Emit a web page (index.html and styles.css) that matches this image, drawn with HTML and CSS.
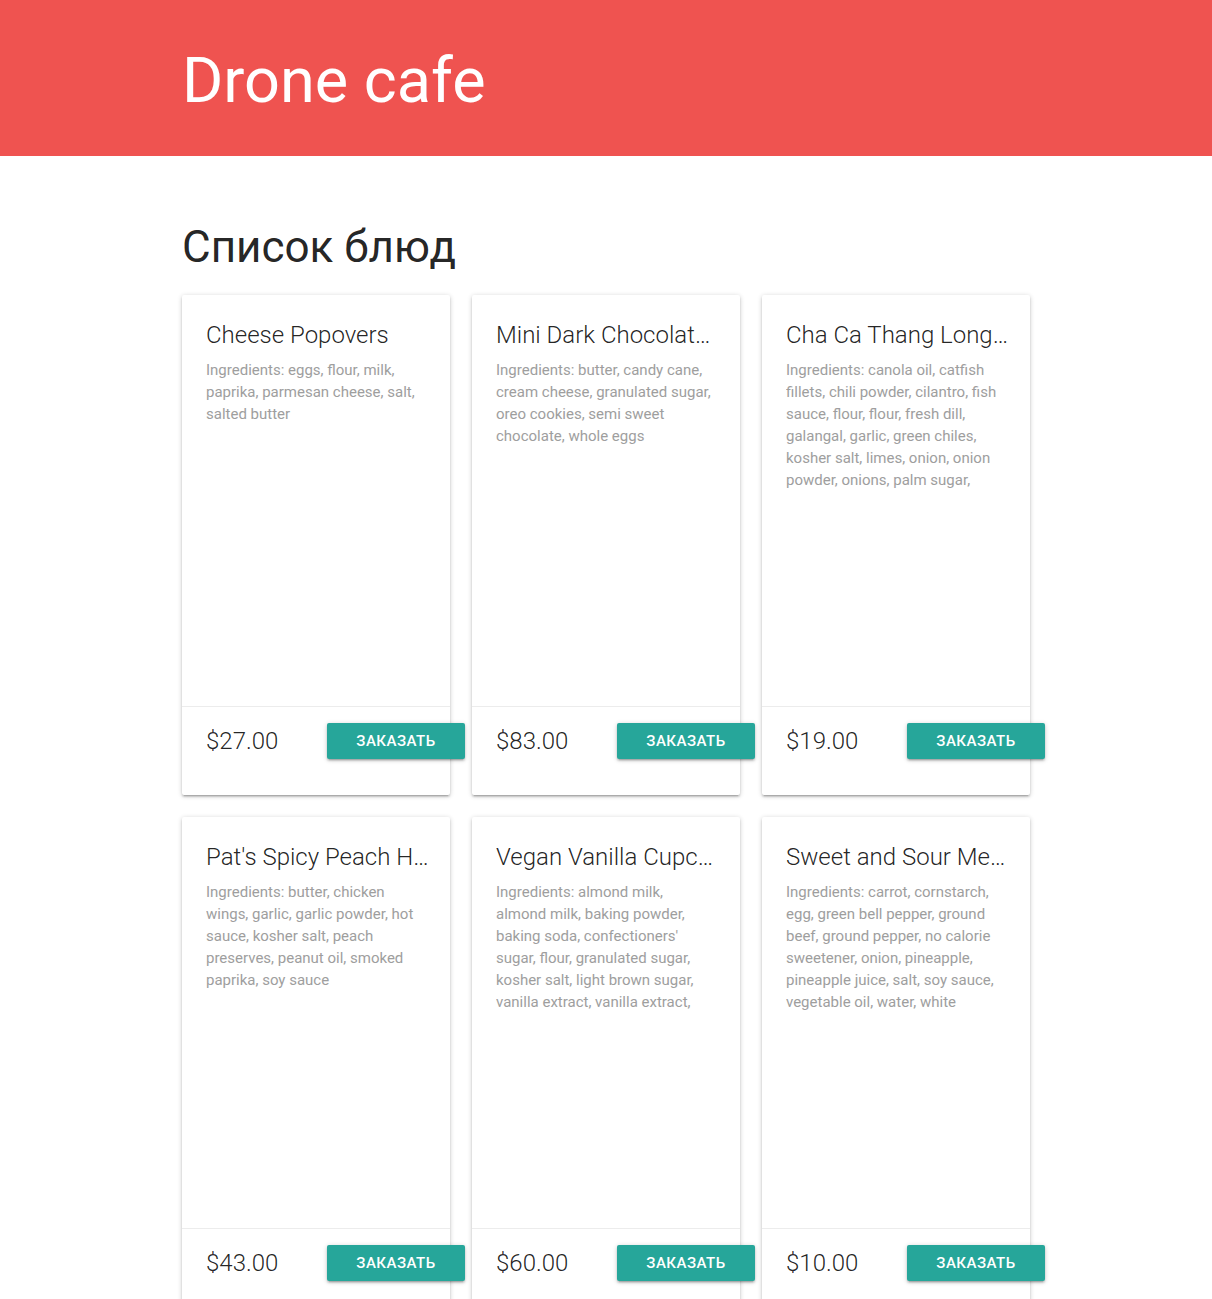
FILE: index.html
```html
<!DOCTYPE html>
<html lang="ru">
<head>
<meta charset="utf-8">
<title>Drone cafe</title>
<link rel="stylesheet" href="styles.css">
</head>
<body>
<header class="header">
  <div class="container">
    <h1 class="logo">Drone cafe</h1>
  </div>
</header>
<main class="container">
  <h3 class="page-title">Список блюд</h3>
  <div class="grid">
    <div class="card">
      <div class="card-content">
        <span class="card-title">Cheese Popovers</span>
        <p class="ingredients">Ingredients: eggs, flour, milk, paprika, parmesan cheese, salt, salted butter</p>
      </div>
      <div class="card-action">
        <span class="price">$27.00</span>
        <button class="btn">Заказать</button>
      </div>
    </div>
    <div class="card">
      <div class="card-content">
        <span class="card-title">Mini Dark Chocolate Cheesecakes</span>
        <p class="ingredients">Ingredients: butter, candy cane, cream cheese, granulated sugar, oreo cookies, semi sweet chocolate, whole eggs</p>
      </div>
      <div class="card-action">
        <span class="price">$83.00</span>
        <button class="btn">Заказать</button>
      </div>
    </div>
    <div class="card">
      <div class="card-content">
        <span class="card-title">Cha Ca Thang Long (Vietnamese Fish)</span>
        <p class="ingredients">Ingredients: canola oil, catfish fillets, chili powder, cilantro, fish sauce, flour, flour, fresh dill, galangal, garlic, green chiles, kosher salt, limes, onion, onion powder, onions, palm sugar, peanuts, rice noodles, scallions, turmeric, water</p>
      </div>
      <div class="card-action">
        <span class="price">$19.00</span>
        <button class="btn">Заказать</button>
      </div>
    </div>
    <div class="card">
      <div class="card-content">
        <span class="card-title">Pat's Spicy Peach Habanero Wings</span>
        <p class="ingredients">Ingredients: butter, chicken wings, garlic, garlic powder, hot sauce, kosher salt, peach preserves, peanut oil, smoked paprika, soy sauce</p>
      </div>
      <div class="card-action">
        <span class="price">$43.00</span>
        <button class="btn">Заказать</button>
      </div>
    </div>
    <div class="card">
      <div class="card-content">
        <span class="card-title">Vegan Vanilla Cupcakes</span>
        <p class="ingredients">Ingredients: almond milk, almond milk, baking powder, baking soda, confectioners' sugar, flour, granulated sugar, kosher salt, light brown sugar, vanilla extract, vanilla extract, vegan butter, vegetable oil</p>
      </div>
      <div class="card-action">
        <span class="price">$60.00</span>
        <button class="btn">Заказать</button>
      </div>
    </div>
    <div class="card">
      <div class="card-content">
        <span class="card-title">Sweet and Sour Meatballs</span>
        <p class="ingredients">Ingredients: carrot, cornstarch, egg, green bell pepper, ground beef, ground pepper, no calorie sweetener, onion, pineapple, pineapple juice, salt, soy sauce, vegetable oil, water, white vinegar</p>
      </div>
      <div class="card-action">
        <span class="price">$10.00</span>
        <button class="btn">Заказать</button>
      </div>
    </div>
  </div>
</main>
</body>
</html>
```
FILE: styles.css
```css
* { box-sizing: border-box; }

html, body {
  margin: 0;
  padding: 0;
}

body {
  font-family: Roboto, "Noto Sans", sans-serif;
  color: rgba(0, 0, 0, 0.87);
  background: #ffffff;
  font-size: 15px;
  line-height: 1.5;
}

.container {
  width: 848px;
  margin: 0 auto;
}

.header {
  background: #ef5350;
  height: 156px;
  padding-top: 46px;
}

.logo {
  margin: 0;
  font-size: 63px;
  font-weight: 400;
  line-height: 69px;
  color: #ffffff;
}

.page-title {
  margin: 67px 0 24px;
  font-size: 44px;
  font-weight: 400;
  line-height: 48px;
  color: rgba(0, 0, 0, 0.87);
}

.grid {
  display: grid;
  grid-template-columns: repeat(3, 268px);
  column-gap: 22px;
  row-gap: 22px;
  padding-bottom: 22px;
}

.card {
  background: #ffffff;
  border-radius: 2px;
  box-shadow: 0 2px 2px 0 rgba(0, 0, 0, 0.14), 0 3px 1px -2px rgba(0, 0, 0, 0.12), 0 1px 5px 0 rgba(0, 0, 0, 0.2);
}

.card-content {
  height: 411px;
  padding: 24px;
}

.card-title {
  display: block;
  font-size: 24px;
  font-weight: 300;
  line-height: 32px;
  margin-bottom: 8px;
  margin-right: -4px;
  white-space: nowrap;
  overflow: hidden;
  text-overflow: ellipsis;
}

.ingredients {
  margin: 0;
  color: #9e9e9e;
  font-size: 15px;
  line-height: 22px;
  max-height: 132px;
  overflow: hidden;
}

.card-action {
  display: flex;
  align-items: center;
  border-top: 1px solid rgba(160, 160, 160, 0.2);
  padding: 16px 24px 36px;
}

.price {
  flex: 0 0 121px;
  font-size: 24px;
  font-weight: 300;
  line-height: 36px;
}

.btn {
  flex: 0 0 138px;
  height: 36px;
  padding: 0;
  border: none;
  border-radius: 2px;
  background: #26a69a;
  color: #ffffff;
  font-family: Roboto, "Noto Sans", sans-serif;
  font-size: 15px;
  font-weight: 500;
  letter-spacing: 0.5px;
  text-transform: uppercase;
  box-shadow: 0 2px 2px 0 rgba(0, 0, 0, 0.14), 0 3px 1px -2px rgba(0, 0, 0, 0.12), 0 1px 5px 0 rgba(0, 0, 0, 0.2);
}
```
